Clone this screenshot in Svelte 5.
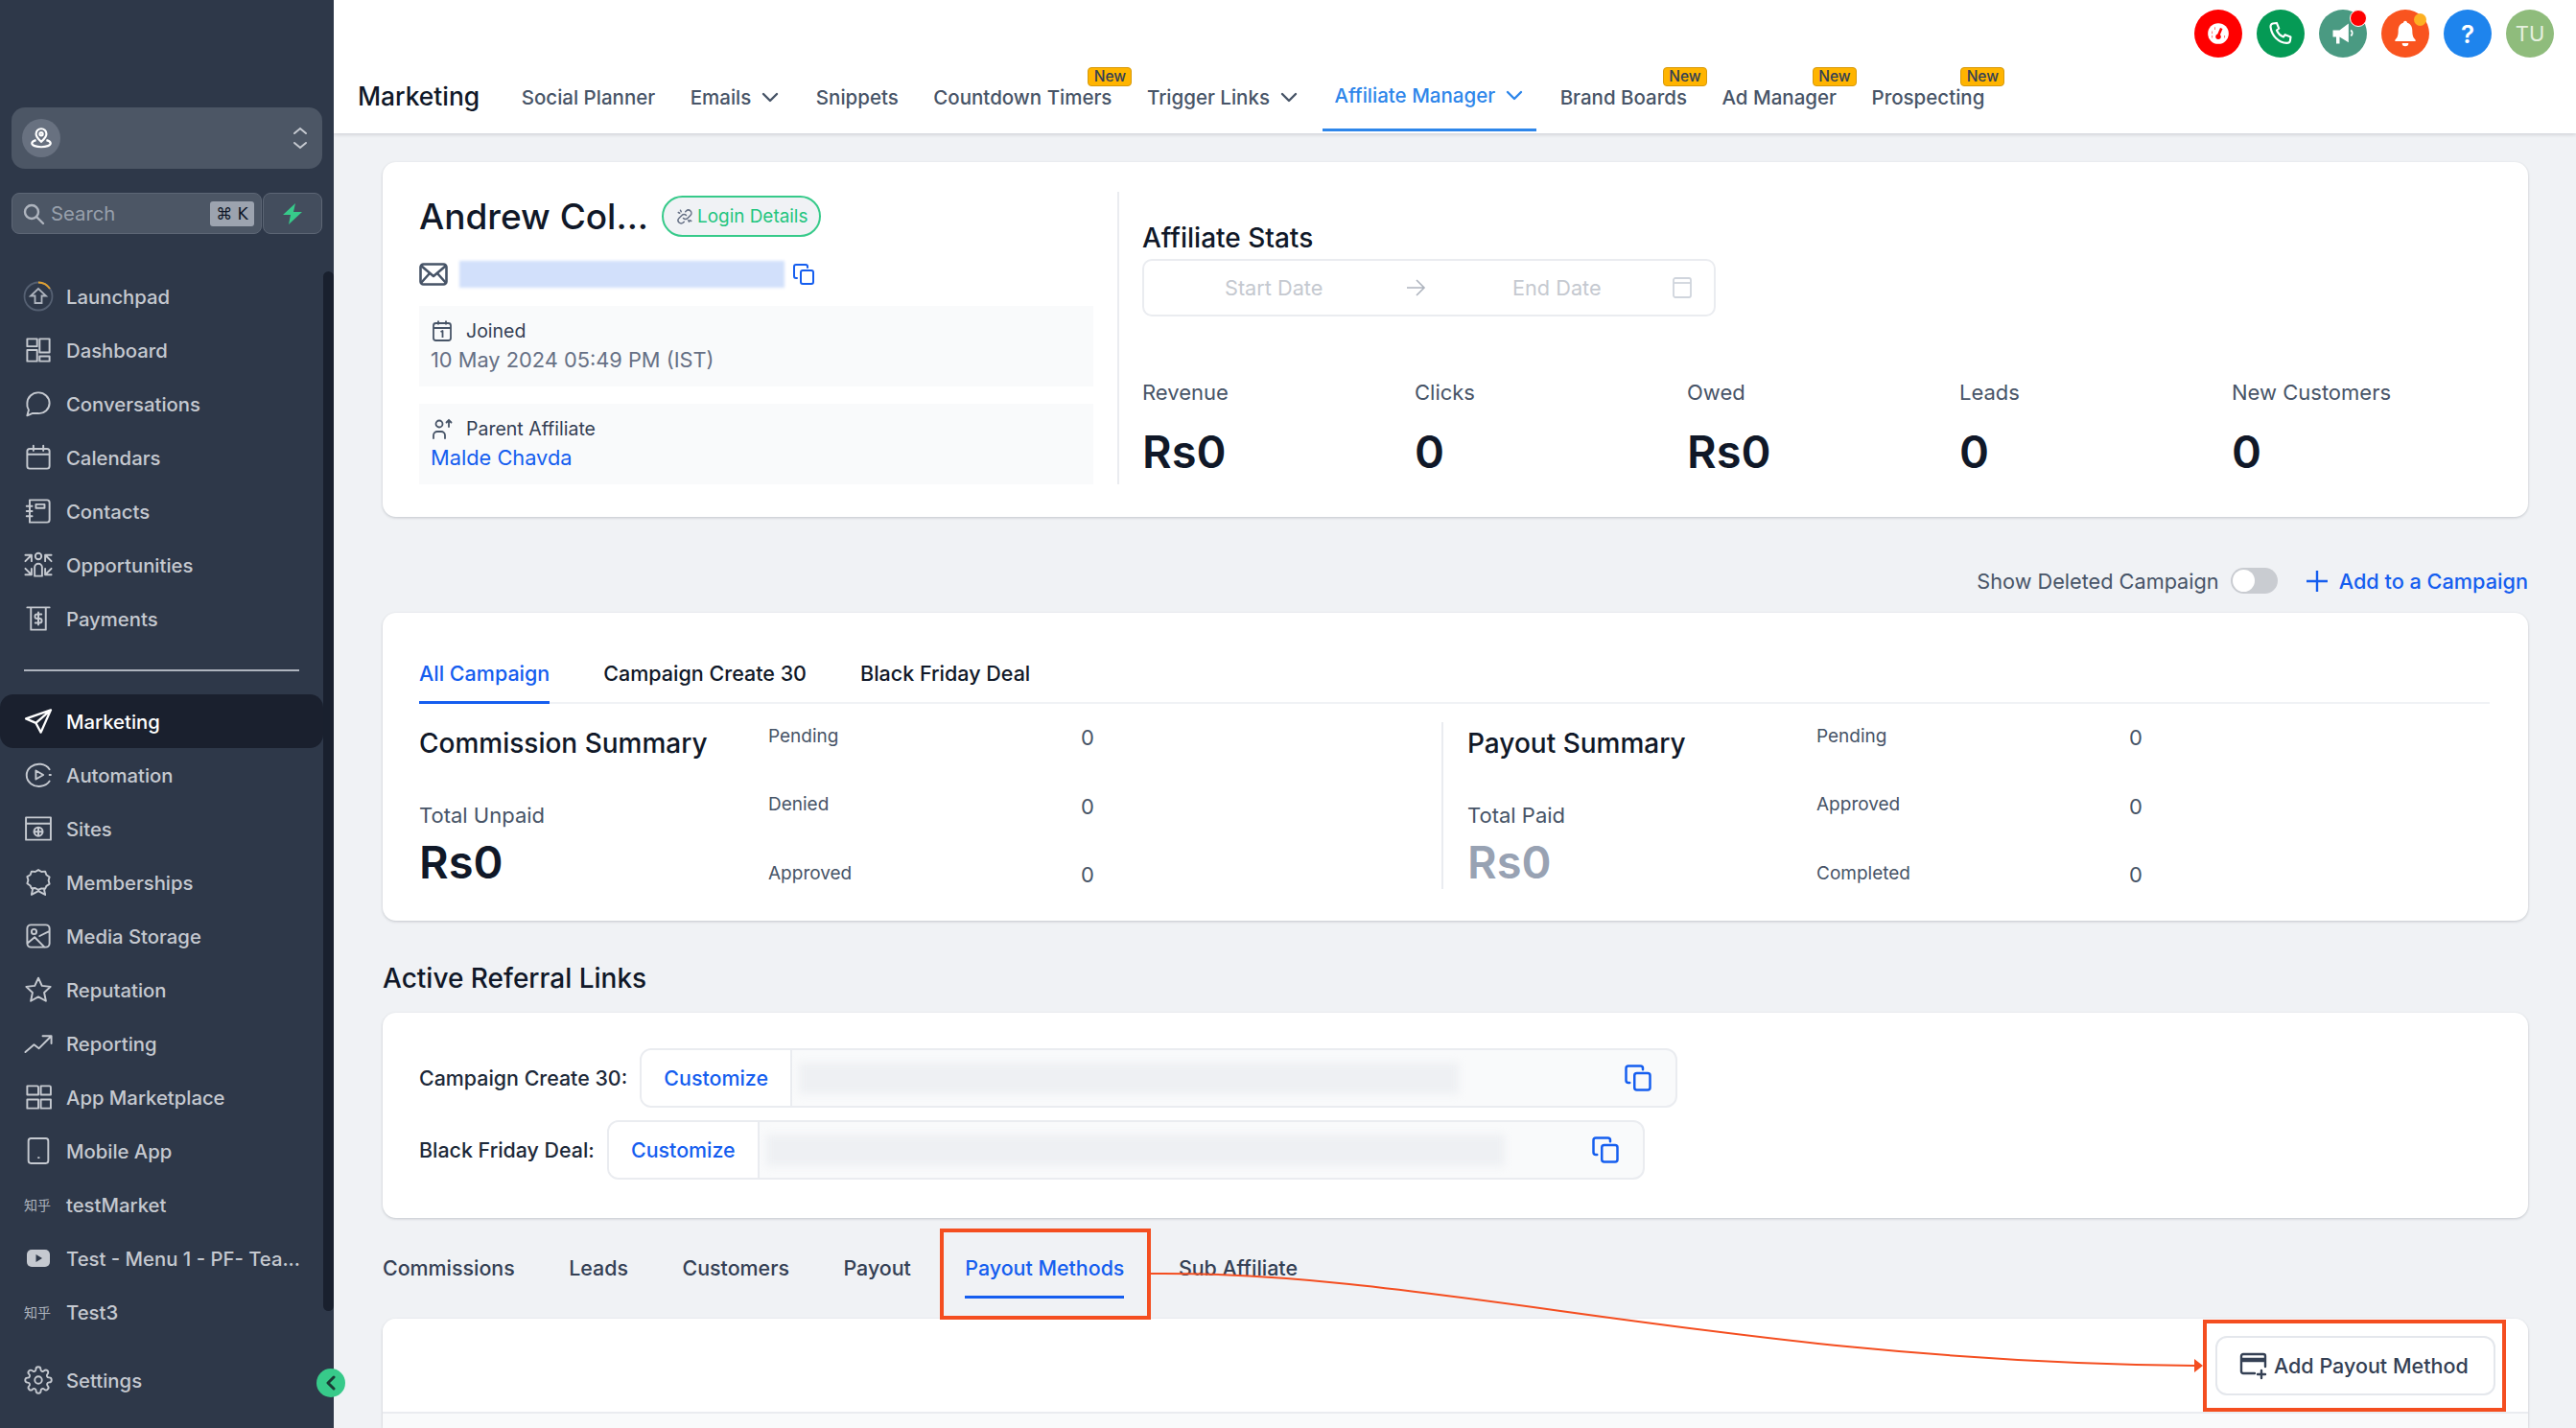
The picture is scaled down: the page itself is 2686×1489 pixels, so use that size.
<script>
  const icons = {
    dashboard: "M3 3h8v6H3z M3 12h8v9H3z M13 3h8v11h-8z M13 17h8v4h-8z",
    chat: "M21 11.5a8.5 8.5 0 0 1-9 8.3H7l-4 1.7 1.2-4.5A8 8 0 0 1 3 11.5 8.7 8.7 0 0 1 12 3a8.7 8.7 0 0 1 9 8.5z",
    calendar: "M3 7a2 2 0 0 1 2-2h14a2 2 0 0 1 2 2v12a2 2 0 0 1-2 2H5a2 2 0 0 1-2-2z M3 9.5h18 M8 2.5v4 M16 2.5v4",
    contacts: "M5 3h14a2 2 0 0 1 2 2v14a2 2 0 0 1-2 2H5z M5 3v18 M2.5 8H7 M2.5 12H7 M2.5 16H7 M10 6.5h7v3h-7z",
    opportunities: "M12 2.5a2.5 2.5 0 1 0 0 5 2.5 2.5 0 0 0 0-5z M9 21v-7a3 3 0 0 1 6 0v7z M1.5 4h5v5 M1.5 9l4-4 M22.5 4h-5v5 M22.5 9l-4-4 M1.5 20h5v-5 M1.5 15l4 4 M22.5 20h-5v-5 M22.5 15l-4 4",
    payments: "M3 3h18 M6 3v18h12V3 M14.5 8.5H11a1.7 1.7 0 0 0 0 3.5h2a1.7 1.7 0 0 1 0 3.5H9.5 M12 7v10",
    plane: "M22 3 2 10l8 3.5L14 21z M10 13.5 22 3",
    automation: "M21 7.5A10 9 0 1 0 21 17 M21 12h1 M10 8.5l6 3.5-6 3.5z",
    sites: "M2 3h20v18H2z M2 8h20 M12 11a3.5 3.5 0 1 0 0 7 3.5 3.5 0 0 0 0-7z M8.5 14.5h7 M12 11v7",
    ribbon: "M12 2l2.5 1.5 3-.3 1 2.8 2.5 1.7-.8 2.8.8 2.8-2.5 1.7-1 2.2-3-.2L12 18l-2.5-1.3-3 .2-1-2.2L3 13l.8-2.8L3 7.5 5.5 6l1-2.8 3 .3z M7.5 17l-1 5 5.5-3 5.5 3-1-5",
    media: "M3 6a3 3 0 0 1 3-3h12a3 3 0 0 1 3 3v12a3 3 0 0 1-3 3H6a3 3 0 0 1-3-3z M8.5 6.5a2 2 0 1 0 0 4 2 2 0 0 0 0-4z M3 18l6-5 8 8 M13 12l8-4",
    star: "M12 2.5l2.9 6.3 6.9.8-5.1 4.7 1.4 6.8-6.1-3.4-6.1 3.4 1.4-6.8L2.2 9.6l6.9-.8z",
    trend: "M1.5 19l7-6 4 3 9-9 M15.5 6h7v6",
    market: "M3 3h8a1 1 0 0 1 1 1v6H3z M14 3h7a1 1 0 0 1 1 1v6h-8z M3 14h9v7H3z M14 14h8v7h-8z",
    mobile: "M6 2h12a2 2 0 0 1 2 2v16a2 2 0 0 1-2 2H6a2 2 0 0 1-2-2V4a2 2 0 0 1 2-2z M12 17.5h.5",
    gear: "M12 9a3 3 0 1 0 0 6 3 3 0 0 0 0-6z M19.4 15a1.65 1.65 0 0 0 .33 1.82l.06.06a2 2 0 0 1-2.83 2.83l-.06-.06a1.65 1.65 0 0 0-2.82 1.18V21a2 2 0 0 1-4 0v-.09A1.65 1.65 0 0 0 7.18 19.73l-.06.06a2 2 0 0 1-2.83-2.83l.06-.06a1.65 1.65 0 0 0-1.18-2.82H3a2 2 0 0 1 0-4h.09A1.65 1.65 0 0 0 4.27 7.18l-.06-.06a2 2 0 0 1 2.83-2.83l.06.06a1.65 1.65 0 0 0 2.82-1.18V3a2 2 0 0 1 4 0v.09a1.65 1.65 0 0 0 2.82 1.18l.06-.06a2 2 0 0 1 2.83 2.83l-.06.06a1.65 1.65 0 0 0 1.18 2.82H21a2 2 0 0 1 0 4h-.09a1.65 1.65 0 0 0-1.51 1z",
  };

  const navTop = [
    { label: "Dashboard", icon: "dashboard" },
    { label: "Conversations", icon: "chat" },
    { label: "Calendars", icon: "calendar" },
    { label: "Contacts", icon: "contacts" },
    { label: "Opportunities", icon: "opportunities" },
    { label: "Payments", icon: "payments" },
  ];
  const navBottom = [
    { label: "Automation", icon: "automation" },
    { label: "Sites", icon: "sites" },
    { label: "Memberships", icon: "ribbon" },
    { label: "Media Storage", icon: "media" },
    { label: "Reputation", icon: "star" },
    { label: "Reporting", icon: "trend" },
    { label: "App Marketplace", icon: "market" },
    { label: "Mobile App", icon: "mobile" },
  ];

  const topTabs = [
    { label: "Social Planner" },
    { label: "Emails", caret: true },
    { label: "Snippets" },
    { label: "Countdown Timers", isNew: true },
    { label: "Trigger Links", caret: true },
    { label: "Affiliate Manager", caret: true, active: true },
    { label: "Brand Boards", isNew: true },
    { label: "Ad Manager", isNew: true },
    { label: "Prospecting", isNew: true },
  ];

  const stats = [
    { label: "Revenue", value: "Rs0" },
    { label: "Clicks", value: "0" },
    { label: "Owed", value: "Rs0" },
    { label: "Leads", value: "0" },
    { label: "New Customers", value: "0" },
  ];

  const bottomTabs = ["Commissions", "Leads", "Customers", "Payout", "Payout Methods", "Sub Affiliate"];
</script>

{#snippet copyIcon(size)}
  <svg class="copy" width={size} height={size} viewBox="0 0 24 24" fill="none" stroke="#155eef" stroke-width="2" stroke-linejoin="round" stroke-linecap="round">
    <path d="M5 16H4a2 2 0 0 1-2-2V4a2 2 0 0 1 2-2h10a2 2 0 0 1 2 2v1" />
    <rect x="9" y="8" width="13" height="14" rx="2" />
  </svg>
{/snippet}

<div class="page">
  <aside class="sidebar">
    <div class="switcher">
      <span class="avatar">
        <svg width="26" height="26" viewBox="0 0 24 24" fill="none" stroke="#fff" stroke-width="2">
          <path d="M12 3a5 5 0 0 0-5 5c0 3 3 5.5 5 7.5 2-2 5-4.5 5-7.5a5 5 0 0 0-5-5z" />
          <circle cx="12" cy="8" r="1.5" />
          <path d="M7 14c-2.5.7-4 1.8-4 3 0 2 4 3.5 9 3.5s9-1.5 9-3.5c0-1.2-1.5-2.3-4-3" />
        </svg>
      </span>
      <svg class="updown" width="16" height="26" viewBox="0 0 16 26" fill="none" stroke="#c5c9d0" stroke-width="2" stroke-linecap="round">
        <path d="M2 8l6-5 6 5 M2 18l6 5 6-5" />
      </svg>
    </div>

    <div class="searchRow">
      <div class="search">
        <svg width="24" height="24" viewBox="0 0 24 24" fill="none" stroke="#aeb4be" stroke-width="2.4" stroke-linecap="round">
          <circle cx="10" cy="10" r="7" /><path d="M15.5 15.5 22 22" />
        </svg>
        <span class="searchText">Search</span>
        <span class="kbd">⌘ K</span>
      </div>
      <div class="bolt">
        <svg width="26" height="24" viewBox="0 0 26 24" fill="#37ca8a"><path d="M16 1 3 13h8l-2 10 14-13h-9z" /></svg>
      </div>
    </div>

    <nav class="nav">
      <div class="navItem">
        <svg class="navIcon launch" width="32" height="32" viewBox="0 0 32 32" fill="none" stroke-width="1.8">
          <circle cx="16" cy="16" r="14.5" stroke="#556072" />
          <path d="M16 1.5a14.5 14.5 0 0 1 12 6.5" stroke="#e0a030" />
          <path d="M16 8l-8 7.5h4.5V23h7v-7.5H24z" stroke="#aeb4be" />
        </svg>
        <span>Launchpad</span>
      </div>
      {#each navTop as item}
        <div class="navItem">
          <svg class="navIcon" width="31" height="31" viewBox="0 0 24 24" fill="none" stroke="currentColor" stroke-width="1.5" stroke-linejoin="round" stroke-linecap="round"><path d={icons[item.icon]} /></svg>
          <span>{item.label}</span>
        </div>
      {/each}

      <div class="navDivider"></div>

      <div class="navItem active">
        <svg class="navIcon" width="31" height="31" viewBox="0 0 24 24" fill="none" stroke="currentColor" stroke-width="1.8" stroke-linejoin="round" stroke-linecap="round"><path d={icons.plane} /></svg>
        <span>Marketing</span>
      </div>
      {#each navBottom as item}
        <div class="navItem">
          <svg class="navIcon" width="31" height="31" viewBox="0 0 24 24" fill="none" stroke="currentColor" stroke-width="1.5" stroke-linejoin="round" stroke-linecap="round"><path d={icons[item.icon]} /></svg>
          <span>{item.label}</span>
        </div>
      {/each}
      <div class="navItem">
        <span class="zhihu">知乎</span>
        <span>testMarket</span>
      </div>
      <div class="navItem">
        <svg class="navIcon" width="24" height="18" viewBox="0 0 24 18"><rect width="24" height="18" rx="5" fill="#c5c9d0" /><path d="M9.5 5l6.5 4-6.5 4z" fill="#2e3849" /></svg>
        <span>Test - Menu 1 - PF- Tea...</span>
      </div>
      <div class="navItem">
        <span class="zhihu">知乎</span>
        <span>Test3</span>
      </div>
      <div class="navItem settings">
        <svg class="navIcon" width="30" height="30" viewBox="0 0 24 24" fill="none" stroke="currentColor" stroke-width="1.5" stroke-linejoin="round"><path d={icons.gear} /></svg>
        <span>Settings</span>
      </div>
    </nav>

    <div class="thumb"></div>
    <div class="collapse">
      <svg width="14" height="16" viewBox="0 0 14 16" fill="none" stroke="#1a3a34" stroke-width="3" stroke-linecap="round" stroke-linejoin="round"><path d="M10 2 4 8l6 6" /></svg>
    </div>
  </aside>

  <div class="main">
    <header class="topbar">
      <div class="topIcons">
        <span class="circle" style="background:#ff0000">
          <svg width="26" height="26" viewBox="0 0 24 24"><circle cx="12" cy="12" r="10" fill="#fff" /><path d="M12 14l3-7" stroke="#ff0000" stroke-width="2.5" /><circle cx="12" cy="15" r="2.5" fill="#ff0000" /><path d="M6 11h.5M8.5 7h.5M6 15h.5M18 15h.5" stroke="#ff0000" stroke-width="2.5" /></svg>
        </span>
        <span class="circle" style="background:#059a55">
          <svg width="28" height="28" viewBox="0 0 24 24" fill="none" stroke="#fff" stroke-width="1.8" stroke-linejoin="round"><path d="M5 3l3.5-.5 2 5-2 1.5a11 11 0 0 0 6 6l1.5-2 5 2-.5 3.5c-.3 1.5-2 2-3 2C10 20 4 14 3 6c0-1 .5-2.7 2-3z" /></svg>
        </span>
        <span class="circle" style="background:#4a9a82">
          <svg width="28" height="28" viewBox="0 0 24 24" fill="#fff"><path d="M3 9h6l8-6v17l-8-5v6H6v-6H3z" /><path d="M19 9a3 3 0 0 1 0 5" stroke="#fff" stroke-width="1.5" fill="none" /></svg>
          <span class="dot red"></span>
        </span>
        <span class="circle" style="background:#f9541f">
          <svg width="32" height="32" viewBox="0 0 24 24" fill="#fff"><path d="M12 2c-1 0-1.5.8-1.5 1.500C7.500 4.500 6.500 7 6.500 10c0 4-1 5.500-2.500 7v1h16v-1c-1.500-1.500-2.500-3-2.500-7 0-3-1-5.500-4-6.500C13.500 2.800 13 2 12 2z" /><path d="M9.500 19.500h5a2.500 2.500 0 0 1-5 0z" /></svg>
          <span class="dot amber"></span>
        </span>
        <span class="circle help" style="background:#1e84ed">?</span>
        <span class="circle initials" style="background:#8fbc7c">TU</span>
      </div>

      <div class="tabsRow">
        <h1 class="pageTitle">Marketing</h1>
        {#each topTabs as tab}
          <div class="topTab" class:active={tab.active}>
            <span>{tab.label}</span>
            {#if tab.caret}
              <svg width="22" height="14" viewBox="0 0 22 14" fill="none" stroke="currentColor" stroke-width="2.4" stroke-linecap="round" stroke-linejoin="round"><path d="M4 3l7 7 7-7" /></svg>
            {/if}
            {#if tab.isNew}
              <span class="newBadge">New</span>
            {/if}
          </div>
        {/each}
      </div>
    </header>

    <div class="content">
      <section class="card profile">
        <div class="profileLeft">
          <div class="nameRow">
            <h2 class="name">Andrew Col...</h2>
            <span class="loginBadge">
              <svg width="18" height="18" viewBox="0 0 24 24" fill="none" stroke="#667085" stroke-width="2" stroke-linecap="round"><path d="M10 14a4 4 0 0 0 6 0l4-4a4 4 0 0 0-6-6l-1 1 M14 10a4 4 0 0 0-6 0l-4 4a4 4 0 0 0 6 6l1-1 M3 6l2 1 M6 3l1 2 M18 19l-1-2 M21 18l-2-1" /></svg>
              Login Details
            </span>
          </div>
          <div class="emailRow">
            <svg width="30" height="24" viewBox="0 0 30 24" fill="none" stroke="#475467" stroke-width="2.6" stroke-linejoin="round"><rect x="1.5" y="1.5" width="27" height="21" rx="3" /><path d="M2 3l13 11L28 3 M2 21l9-10 M28 21l-9-10" /></svg>
            <span class="emailBlur"></span>
            {@render copyIcon(24)}
          </div>
          <div class="infoBlock">
            <div class="infoHead">
              <svg width="24" height="24" viewBox="0 0 24 24" fill="none" stroke="#475467" stroke-width="1.8" stroke-linejoin="round"><rect x="3" y="4" width="18" height="18" rx="2.5" /><path d="M3 9h18 M8 1.5v4 M16 1.5v4 M10.5 13l2-1v7" /></svg>
              <span>Joined</span>
            </div>
            <div class="infoValue">10 May 2024 05:49 PM (IST)</div>
          </div>
          <div class="infoBlock">
            <div class="infoHead">
              <svg width="24" height="24" viewBox="0 0 24 24" fill="none" stroke="#475467" stroke-width="1.8" stroke-linecap="round"><circle cx="9" cy="7" r="3.5" /><path d="M3 22v-3a4 4 0 0 1 4-4h4a4 4 0 0 1 4 4v3 M19 10V3 M16.5 5.5 19 3l2.5 2.5" /></svg>
              <span>Parent Affiliate</span>
            </div>
            <div class="infoValue link">Malde Chavda</div>
          </div>
        </div>

        <div class="profileRight">
          <h3 class="cardTitle">Affiliate Stats</h3>
          <div class="datePicker">
            <span class="dateStart">Start Date</span>
            <svg class="dateArrow" width="22" height="22" viewBox="0 0 22 22" fill="none" stroke="#aeb4be" stroke-width="1.6"><path d="M2 11h18 M12 3l8 8-8 8" /></svg>
            <span class="dateEnd">End Date</span>
            <svg class="dateCal" width="20" height="22" viewBox="0 0 20 22" fill="none" stroke="#d0d5dd" stroke-width="1.8"><rect x="1" y="1" width="18" height="20" rx="2" /><path d="M1 6h18" /></svg>
          </div>
          <div class="statsGrid">
            {#each stats as stat}
              <div>
                <div class="statLabel">{stat.label}</div>
                <div class="bigValue">{stat.value}</div>
              </div>
            {/each}
          </div>
        </div>
      </section>

      <div class="campaignBar">
        <span>Show Deleted Campaign</span>
        <span class="toggle"><span class="knob"></span></span>
        <span class="addCampaign">
          <svg width="22" height="22" viewBox="0 0 22 22" stroke="#155eef" stroke-width="2.4"><path d="M11 0v22 M0 11h22" /></svg>
          Add to a Campaign
        </span>
      </div>

      <section class="card summaryCard">
        <div class="innerTabs">
          <span class="innerTab active">All Campaign</span>
          <span class="innerTab">Campaign Create 30</span>
          <span class="innerTab">Black Friday Deal</span>
        </div>
        <div class="summaries">
          <div class="summary">
            <div class="summaryMain">
              <h3 class="cardTitle small">Commission Summary</h3>
              <div class="statLabel total">Total Unpaid</div>
              <div class="bigValue">Rs0</div>
            </div>
            <div class="summaryRows">
              <div class="sRow"><span>Pending</span><b>0</b></div>
              <div class="sRow"><span>Denied</span><b>0</b></div>
              <div class="sRow"><span>Approved</span><b>0</b></div>
            </div>
          </div>
          <div class="summary second">
            <div class="summaryMain">
              <h3 class="cardTitle small">Payout Summary</h3>
              <div class="statLabel total">Total Paid</div>
              <div class="bigValue muted">Rs0</div>
            </div>
            <div class="summaryRows">
              <div class="sRow"><span>Pending</span><b>0</b></div>
              <div class="sRow"><span>Approved</span><b>0</b></div>
              <div class="sRow"><span>Completed</span><b>0</b></div>
            </div>
          </div>
        </div>
      </section>

      <h3 class="linksTitle">Active Referral Links</h3>

      <section class="card linksCard">
        <div class="linkRow">
          <span>Campaign Create 30:</span>
          <div class="linkField">
            <span class="customize">Customize</span>
            <span class="linkBlur" style="width:688px"></span>
            {@render copyIcon(30)}
          </div>
        </div>
        <div class="linkRow">
          <span>Black Friday Deal:</span>
          <div class="linkField">
            <span class="customize">Customize</span>
            <span class="linkBlur" style="width:770px"></span>
            {@render copyIcon(30)}
          </div>
        </div>
      </section>

      <div class="bottomTabs">
        {#each bottomTabs as tab}
          <span class="bottomTab" class:active={tab === "Payout Methods"}>{tab}</span>
        {/each}
      </div>

      <section class="card methodsCard">
        <div class="methodsHead">
          <button class="addMethod">
            <svg width="30" height="30" viewBox="0 0 30 30" fill="none" stroke="#344054" stroke-width="2.4" stroke-linecap="round" stroke-linejoin="round"><path d="M16 23H4a2 2 0 0 1-2-2V5a2 2 0 0 1 2-2h21a2 2 0 0 1 2 2v11 M2 10h25 M2 8h25 M23 20v8 M19 24h8" /></svg>
            Add Payout Method
          </button>
        </div>
      </section>
    </div>
  </div>

  <!-- annotation drawn over the screenshot -->
  <svg class="annotation" width="2686" height="1489" viewBox="0 0 2686 1489" fill="none">
    <rect x="982" y="1283" width="216" height="91" stroke="#f44e20" stroke-width="4" />
    <rect x="2299" y="1378" width="312" height="92" stroke="#f44e20" stroke-width="4" />
    <path d="M1200 1328C1500 1325 1800 1420 2292 1424" stroke="#f44e20" stroke-width="2" />
    <path d="M2288 1417l9 7-9 7z" fill="#f44e20" />
  </svg>
</div>

<style>
  :global(body) {
    margin: 0;
    background: #f0f2f5;
    font-family: Inter, "Liberation Sans", sans-serif;
  }

  .page {
    position: relative;
    display: flex;
    width: 2686px;
    height: 1489px;
    overflow: hidden;
    font-size: 21.7px;
    color: #101828;
  }

  h1, h2, h3 {
    margin: 0;
    font-weight: 500;
  }

  /* sidebar */
  .sidebar {
    position: relative;
    flex: 0 0 348px;
    box-sizing: border-box;
    background: #2e3849;
    padding-top: 112px;
  }
  .switcher {
    display: flex;
    align-items: center;
    justify-content: space-between;
    height: 64px;
    margin: 0 12px;
    padding: 0 15px 0 11px;
    background: #4c5665;
    border-radius: 14px;
  }
  .avatar {
    display: flex;
    align-items: center;
    justify-content: center;
    width: 40px;
    height: 40px;
    border-radius: 50%;
    background: #687180;
  }
  .searchRow {
    display: flex;
    gap: 1px;
    height: 43px;
    margin: 25px 12px 0;
  }
  .search {
    display: flex;
    align-items: center;
    flex: 1;
    padding: 0 7px 0 10px;
    background: #4c5665;
    border: 1px solid #5d6675;
    border-radius: 8px;
  }
  .searchText {
    flex: 1;
    margin-left: 6px;
    color: #98a0ac;
    font-size: 20.3px;
  }
  .kbd {
    width: 46px;
    height: 26px;
    background: #9ca3af;
    border-radius: 3px;
    color: #101828;
    font-size: 17px;
    line-height: 26px;
    text-align: center;
    font-family: "DejaVu Sans", sans-serif;
  }
  .bolt {
    display: flex;
    align-items: center;
    justify-content: center;
    width: 60px;
    background: #434d5d;
    border: 1px solid #5d6675;
    border-radius: 8px;
  }
  .nav {
    margin-top: 37px;
  }
  .navItem {
    position: relative;
    display: flex;
    align-items: center;
    height: 56px;
    width: 337px;
    box-sizing: border-box;
    padding-left: 69px;
    color: #c5c9d0;
    font-weight: 500;
    font-size: 20.3px;
    white-space: nowrap;
  }
  .navItem.active {
    color: #fff;
    background: #1a202e;
    border-radius: 14px;
  }
  .navIcon {
    position: absolute;
    left: 40px;
    top: 50%;
    transform: translate(-50%, -50%);
  }
  .zhihu {
    position: absolute;
    left: 25px;
    font-size: 14px;
    font-family: "Noto Sans CJK SC", sans-serif;
    font-weight: 400;
    color: #aeb4be;
  }
  .navDivider {
    height: 2px;
    width: 287px;
    margin: 25px 0 24px 25px;
    background: #aeb4be;
  }
  .settings {
    margin-top: 15px;
  }
  .thumb {
    position: absolute;
    left: 337px;
    top: 283px;
    width: 11px;
    height: 1084px;
    background: #19202e;
    border-radius: 6px;
  }
  .collapse {
    position: absolute;
    left: 330px;
    top: 1427px;
    z-index: 2;
    display: flex;
    align-items: center;
    justify-content: center;
    width: 30px;
    height: 30px;
    background: #37ca8a;
    border-radius: 50%;
  }

  /* top bar */
  .main {
    flex: 1;
    min-width: 0;
    display: flex;
    flex-direction: column;
  }
  .topbar {
    height: 139px;
    box-sizing: border-box;
    background: #fff;
    box-shadow: 0 1px 4px rgba(16, 24, 40, 0.18);
  }
  .topIcons {
    display: flex;
    justify-content: flex-end;
    gap: 15px;
    padding: 10px 23px 0 0;
    height: 50px;
  }
  .circle {
    position: relative;
    display: flex;
    align-items: center;
    justify-content: center;
    width: 50px;
    height: 50px;
    border-radius: 50%;
    color: #fff;
  }
  .help {
    font-size: 26px;
    font-weight: 600;
  }
  .initials {
    font-size: 22px;
    color: #e6f0df;
  }
  .dot {
    position: absolute;
    width: 16px;
    height: 16px;
    border-radius: 50%;
  }
  .dot.red {
    top: 0;
    right: 0;
    background: #ff0000;
    border: 1px solid #fff;
  }
  .dot.amber {
    top: 4px;
    right: 3px;
    width: 13px;
    height: 13px;
    background: #fdb022;
  }
  .tabsRow {
    display: flex;
    align-items: stretch;
    gap: 12.5px;
    height: 77px;
    padding-left: 25px;
  }
  .pageTitle {
    font-size: 26.4px;
    line-height: 80px;
    margin-right: 19px;
    white-space: nowrap;
  }
  .topTab {
    position: relative;
    display: flex;
    align-items: center;
    gap: 9px;
    padding: 6px 12px 0;
    color: #475467;
    font-size: 20.5px;
    font-weight: 500;
    white-space: nowrap;
  }
  .topTab.active {
    color: #2e86ea;
    padding-top: 2px;
    box-shadow: inset 0 -3px 0 #2e86ea;
  }
  .newBadge {
    position: absolute;
    top: 10px;
    right: -9px;
    box-sizing: border-box;
    width: 46px;
    height: 20px;
    background: #ffb400;
    border: 1px solid #d79a0c;
    border-radius: 4px;
    color: #344054;
    font-size: 15.5px;
    line-height: 18px;
    text-align: center;
  }

  /* page content */
  .content {
    flex: 1;
    display: flex;
    flex-direction: column;
    padding: 30px 50px 0 51px;
    min-height: 0;
  }
  .card {
    background: #fff;
    border-radius: 14px;
    box-shadow: 0 1px 3px rgba(16, 24, 40, 0.2);
  }
  .profile {
    display: flex;
    height: 370px;
    box-sizing: border-box;
    padding: 31px 0 34px 38px;
  }
  .profileLeft {
    width: 703px;
    padding-top: 4px;
    margin-right: 25px;
  }
  .nameRow {
    display: flex;
    align-items: center;
    gap: 14px;
    height: 43px;
  }
  .name {
    font-size: 37px;
    white-space: nowrap;
    color: #101828;
  }
  .loginBadge {
    display: flex;
    align-items: center;
    gap: 4px;
    box-sizing: border-box;
    height: 43px;
    padding: 0 12px 0 13px;
    background: #f0f2f5;
    border: 2px solid #37ca8a;
    border-radius: 22px;
    color: #22c57e;
    font-size: 18.9px;
  }
  .emailRow {
    display: flex;
    align-items: center;
    height: 28px;
    margin-top: 25px;
  }
  .emailBlur {
    width: 339px;
    height: 28px;
    margin: 0 8px 0 12px;
    background: #d2e0fb;
    filter: blur(1.5px);
  }
  .infoBlock {
    box-sizing: border-box;
    height: 84px;
    margin-top: 18px;
    padding: 14px 12px 0;
    background: #f9fafb;
  }
  .emailRow + .infoBlock {
    margin-top: 19px;
  }
  .infoHead {
    display: flex;
    align-items: center;
    gap: 13px;
    height: 24px;
    color: #344054;
    font-size: 19.5px;
  }
  .infoValue {
    margin-top: 3px;
    height: 30px;
    line-height: 30px;
    color: #667085;
    font-size: 21.8px;
  }
  .infoValue.link {
    color: #155eef;
  }
  .profileRight {
    flex: 1;
    padding: 31px 0 0 24px;
    border-left: 2px solid #eaecf0;
  }
  .cardTitle {
    font-size: 28px;
    line-height: 34px;
    color: #101828;
  }
  .datePicker {
    position: relative;
    display: flex;
    align-items: center;
    box-sizing: border-box;
    width: 598px;
    height: 60px;
    margin-top: 5px;
    padding-left: 84px;
    border: 2px solid #eaecf0;
    border-radius: 10px;
    color: #c5c9d0;
  }
  .dateStart {
    width: 188px;
  }
  .dateArrow {
    margin-right: 90px;
  }
  .dateEnd {
    flex: 1;
  }
  .dateCal {
    margin-right: 23px;
  }
  .statsGrid {
    display: grid;
    grid-template-columns: repeat(5, 284px);
    margin-top: 64px;
  }
  .statLabel {
    height: 30px;
    line-height: 30px;
    color: #475467;
    font-size: 22px;
    white-space: nowrap;
  }
  .bigValue {
    margin-top: 18px;
    height: 58px;
    line-height: 58px;
    font-size: 47px;
    font-weight: 600;
    color: #101828;
  }
  .bigValue.muted {
    color: #98a2b3;
  }
  .campaignBar {
    display: flex;
    align-items: center;
    justify-content: flex-end;
    height: 27px;
    margin: 53px 0 20px;
    color: #475467;
  }
  .toggle {
    position: relative;
    box-sizing: border-box;
    width: 49px;
    height: 27px;
    margin: 0 30px 0 12px;
    background: #c9ccd1;
    border-radius: 14px;
  }
  .knob {
    position: absolute;
    left: 2px;
    top: 2px;
    width: 23px;
    height: 23px;
    background: #fff;
    border-radius: 50%;
  }
  .addCampaign {
    display: flex;
    align-items: center;
    gap: 12px;
    color: #155eef;
    font-weight: 500;
  }

  .summaryCard {
    box-sizing: border-box;
    height: 321px;
    padding: 48px 40px 0 38px;
  }
  .innerTabs {
    display: flex;
    gap: 56px;
    border-bottom: 2px solid #f0f2f5;
  }
  .innerTab {
    height: 44px;
    margin-bottom: -2px;
    border-bottom: 3px solid transparent;
    line-height: 30px;
    color: #101828;
    font-weight: 500;
    font-size: 21.5px;
  }
  .innerTab.active {
    color: #155eef;
    border-bottom-color: #155eef;
  }
  .summaries {
    display: flex;
    margin-top: 19px;
  }
  .summary {
    display: flex;
    width: 1066px;
    height: 174px;
  }
  .summary.second {
    flex: 1;
    box-sizing: border-box;
    padding-left: 25px;
    border-left: 2px solid #eaecf0;
  }
  .summaryMain {
    width: 364px;
    padding-top: 2px;
  }
  .cardTitle.small {
    line-height: 40px;
  }
  .total {
    margin-top: 40px;
  }
  .total + .bigValue {
    margin-top: 5px;
  }
  .summaryRows {
    display: flex;
    flex-direction: column;
    gap: 41.5px;
    margin-top: -1px;
  }
  .sRow {
    display: flex;
    align-items: center;
    height: 30px;
    color: #475467;
    font-size: 19px;
  }
  .sRow span {
    width: 326px;
  }
  .sRow b {
    margin-top: 4px;
    font-weight: 400;
    font-size: 22px;
  }
  .linksTitle {
    margin-top: 43px;
    font-size: 28px;
    line-height: 34px;
    height: 34px;
  }
  .linksCard {
    display: flex;
    flex-direction: column;
    gap: 13px;
    box-sizing: border-box;
    height: 214px;
    margin-top: 19px;
    padding: 37px 38px 0;
  }
  .linkRow {
    display: flex;
    align-items: center;
    gap: 13px;
    font-size: 21.4px;
    font-weight: 500;
    color: #1d2939;
  }
  .linkField {
    display: flex;
    align-items: center;
    box-sizing: border-box;
    width: 1082px;
    height: 62px;
    background: #f9fafb;
    border: 2px solid #eaecf0;
    border-radius: 12px;
    overflow: hidden;
  }
  .customize {
    flex: 0 0 157px;
    box-sizing: border-box;
    height: 100%;
    line-height: 58px;
    text-align: center;
    background: #fff;
    border-right: 2px solid #eaecf0;
    color: #155eef;
  }
  .linkBlur {
    height: 33px;
    margin-left: 7px;
    background: #eef0f3;
    filter: blur(4px);
  }
  .linkField .copy {
    margin-left: auto;
    margin-right: 24px;
  }
  .bottomTabs {
    display: flex;
    gap: 56.5px;
    margin-top: 37px;
  }
  .bottomTab {
    height: 44px;
    border-bottom: 3px solid transparent;
    line-height: 30px;
    color: #344054;
    font-weight: 500;
    font-size: 21.4px;
  }
  .bottomTab.active {
    color: #155eef;
    border-bottom-color: #155eef;
  }
  .methodsCard {
    flex: 1;
    margin-top: 21px;
    background: #f9fafb;
    border-radius: 14px 14px 0 0;
  }
  .methodsHead {
    display: flex;
    justify-content: flex-end;
    box-sizing: border-box;
    height: 99px;
    padding: 18px 34px 0 0;
    background: #fff;
    border-bottom: 2px solid #eaecf0;
    border-radius: 14px 14px 0 0;
  }
  .addMethod {
    display: flex;
    align-items: center;
    gap: 6px;
    box-sizing: border-box;
    width: 292px;
    height: 62px;
    padding: 0 0 0 23px;
    background: #fff;
    border: 2px solid #e4e7ec;
    border-radius: 12px;
    color: #344054;
    font: 500 21.5px Inter, "Liberation Sans", sans-serif;
    white-space: nowrap;
  }
  .annotation {
    position: absolute;
    left: 0;
    top: 0;
    pointer-events: none;
  }
</style>
